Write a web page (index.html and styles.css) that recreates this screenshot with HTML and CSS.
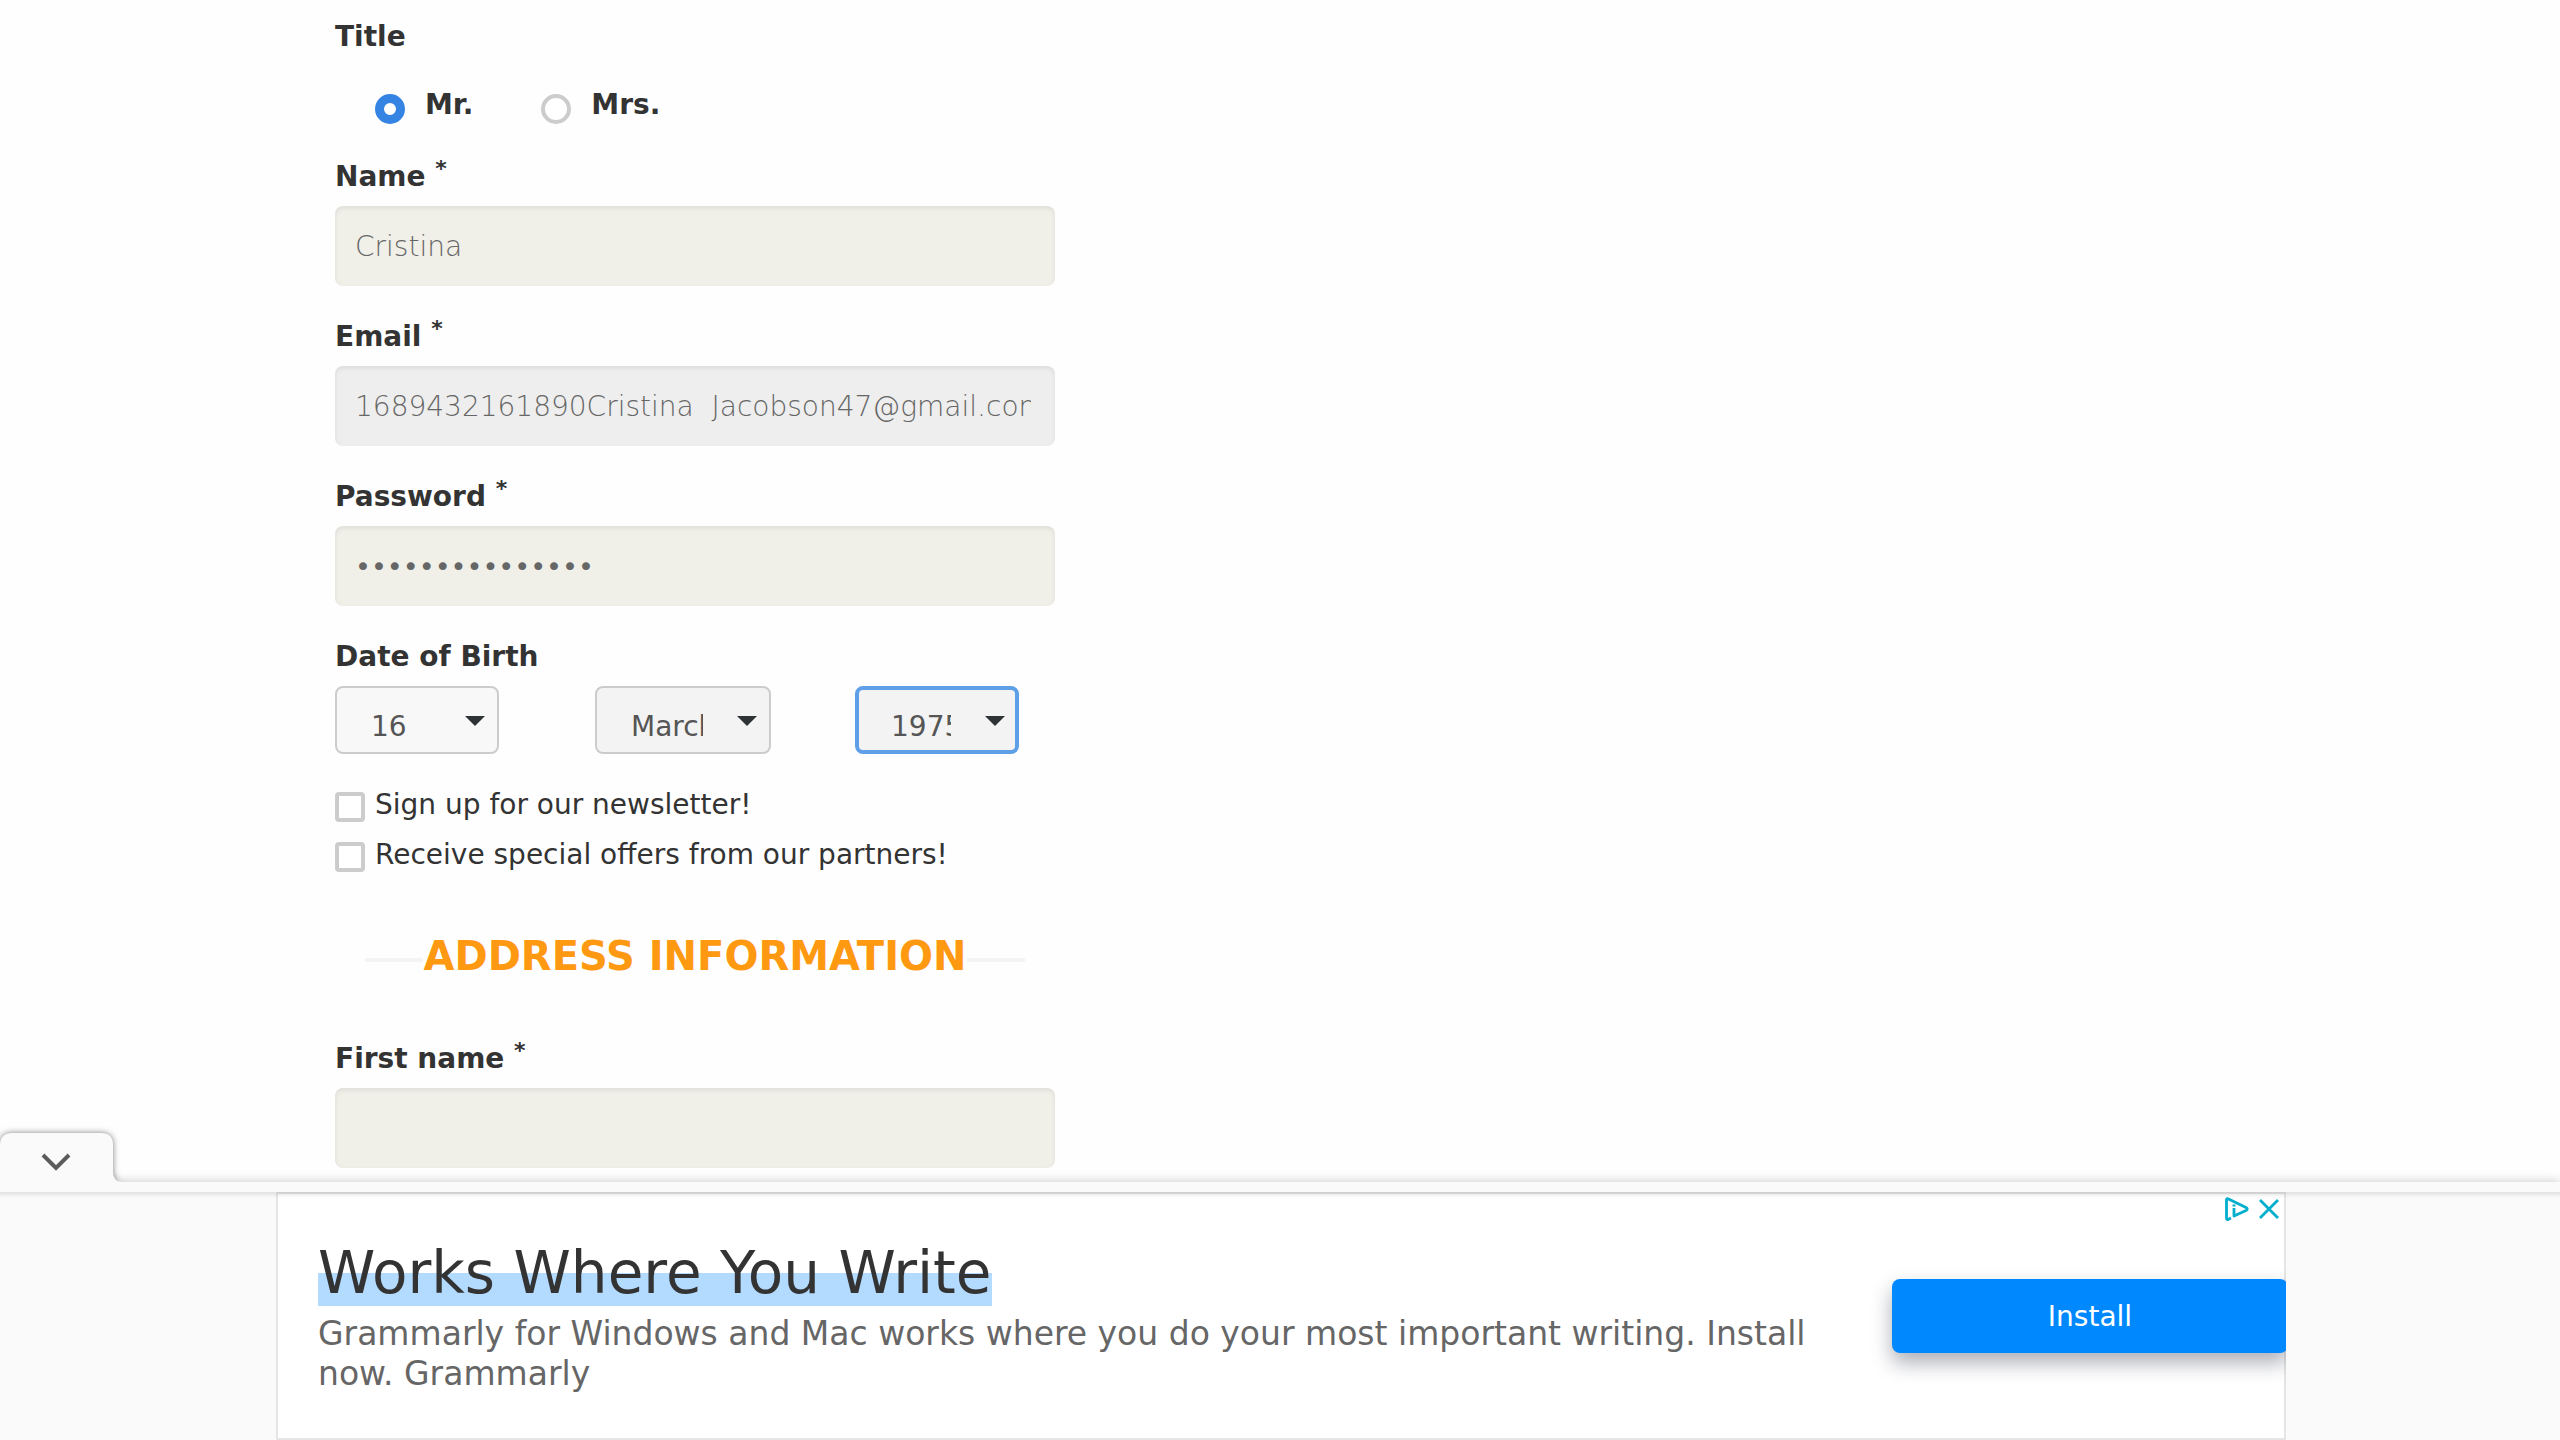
FILE: index.html
```html
<!DOCTYPE html>
<html lang="en">
<head>
<meta charset="utf-8">
<meta name="viewport" content="width=device-width, initial-scale=1">
<title>Create account</title>
<link rel="stylesheet" href="styles.css">
</head>
<body>
<main class="page">
  <form class="form">
    <fieldset class="group">
      <legend class="label">Title</legend>
      <div class="radios">
        <label class="radio"><input type="radio" name="title" checked><span>Mr.</span></label>
        <label class="radio"><input type="radio" name="title"><span>Mrs.</span></label>
      </div>
    </fieldset>

    <div class="field">
      <label class="label" for="name">Name <sup>*</sup></label>
      <input class="input" id="name" type="text" value="Cristina">
    </div>
    <div class="field">
      <label class="label" for="email">Email <sup>*</sup></label>
      <input class="input input-disabled" id="email" type="text" value="1689432161890Cristina  Jacobson47@gmail.com" readonly>
    </div>
    <div class="field">
      <label class="label" for="password">Password <sup>*</sup></label>
      <input class="input input-password" id="password" type="password" value="abcdefghijklmno">
    </div>

    <fieldset class="group">
      <legend class="label">Date of Birth</legend>
      <div class="dates">
        <div class="select select-day">
          <select aria-label="Day"><option>16</option></select>
          <svg class="arrow" viewBox="0 0 20 10" aria-hidden="true"><path d="M0 0h20L10 10z"/></svg>
        </div>
        <div class="select select-month">
          <select aria-label="Month"><option>March</option></select>
          <svg class="arrow" viewBox="0 0 20 10" aria-hidden="true"><path d="M0 0h20L10 10z"/></svg>
        </div>
        <div class="select select-active">
          <select aria-label="Year"><option>1975</option></select>
          <svg class="arrow" viewBox="0 0 20 10" aria-hidden="true"><path d="M0 0h20L10 10z"/></svg>
        </div>
      </div>
    </fieldset>

    <div class="checks">
      <label class="check"><input type="checkbox"><span>Sign up for our newsletter!</span></label>
      <label class="check"><input type="checkbox"><span>Receive special offers from our partners!</span></label>
    </div>

    <h2 class="heading">Address Information</h2>

    <div class="field">
      <label class="label" for="first-name">First name <sup>*</sup></label>
      <input class="input" id="first-name" type="text">
    </div>
  </form>
</main>

<aside class="banner">
  <button class="collapse" type="button" aria-label="Hide advertisement">
    <svg viewBox="0 0 132 60" aria-hidden="true">
      <path class="tab" d="M0 22Q1 11 12 11H101Q113 11 113 23V50Q113 60 123 60H0z"/>
      <path class="chevron" d="M43 33L56 46L69 33"/>
    </svg>
  </button>
  <div class="ad">
    <div class="copy">
      <h3 class="ad-title"><span>Works Where You Write</span></h3>
      <p class="ad-text">Grammarly for Windows and Mac works where you do your most important writing. Install now. Grammarly</p>
    </div>
    <button class="install" type="button">Install</button>
    <div class="ad-controls">
      <a href="#" aria-label="About this ad"><svg width="24" height="24" viewBox="0 0 24 24"><path d="M6 21L3 22.500Q1.500 23 1.500 21V3Q1.500 1 3.500 2L21 10.500Q23.500 12 21 13.500L9 19V11" fill="none" stroke="#00aecd" stroke-width="2.800" stroke-linejoin="round"/><path d="M7.500 7.500h3v2h-3z" fill="#00aecd"/></svg></a>
      <a href="#" aria-label="Close ad"><svg width="20" height="20" viewBox="0 0 20 20"><path d="M1 1L19 19M19 1L1 19" fill="none" stroke="#00aecd" stroke-width="2.800"/></svg></a>
    </div>
  </div>
</aside>
</body>
</html>
```
FILE: styles.css
```css
* {
  box-sizing: border-box;
}

body {
  margin: 0;
  height: 100vh;
  overflow: hidden;
  background: #fefefe;
  color: #333;
  font: 28px/36px "DejaVu Sans", sans-serif;
}

.page {
  padding: 19px 24px 0 335px;
}

.form {
  max-width: 720px;
}

.group {
  margin: 0 0 33px;
  padding: 0;
  border: 0;
  min-width: 0;
}

.group legend {
  padding: 0;
}

.label {
  display: block;
  font-weight: 700;
}

.label sup {
  font-size: 22px;
  line-height: 0;
  vertical-align: 10px;
}

.radios {
  display: flex;
  gap: 68px;
  margin-top: 33px;
  padding: 0 0 2px 40px;
}

.radio {
  display: flex;
  gap: 20px;
  height: 36px;
  font-weight: 700;
  line-height: 34px;
}

.radio input,
.check input {
  appearance: none;
  flex: none;
  align-self: flex-end;
  width: 30px;
  height: 30px;
  margin: 0;
  border: 4px solid #ccc;
  background: #fff;
}

.radio input {
  border-radius: 50%;
}

.radio input:checked {
  border: 9px solid #3584e4;
}

.field {
  margin-bottom: 33px;
}

.input {
  display: block;
  width: 100%;
  height: 80px;
  margin-top: 11px;
  padding: 0 24px 0 20px;
  border: 0;
  border-radius: 8px;
  outline: 0;
  background: #f0efe8;
  box-shadow: inset 0 2px 5px rgba(0, 0, 0, 0.08);
  color: #666;
  font: 200 28px/32px "DejaVu Sans", sans-serif;
}

.input-disabled {
  background: #eee;
}

.input-password {
  font-size: 27px;
  font-weight: 400;
}

.dates {
  display: grid;
  grid-template-columns: repeat(3, 260px);
  margin-top: 11px;
}

.select {
  position: relative;
  width: 164px;
}

.select-month {
  width: 176px;
}

.select select {
  appearance: none;
  display: block;
  width: 100%;
  height: 68px;
  padding: 14px 66px 0 34px;
  border: 2px solid #ccc;
  border-radius: 8px;
  background: #f3f3f3;
  color: #555;
  font: inherit;
}

.select-day select {
  background: #f8f8f8;
}

.select-active select {
  border: 4px solid #5e9fe8;
  padding: 14px 64px 0 32px;
}

.arrow {
  position: absolute;
  top: 30px;
  right: 14px;
  width: 20px;
  height: 10px;
  fill: #2e3436;
  pointer-events: none;
}

.checks {
  display: grid;
  gap: 15px;
}

.check {
  display: flex;
  gap: 10px;
  height: 35px;
}

.check input {
  border-radius: 4px;
}

.heading {
  display: flex;
  align-items: center;
  margin: 60px 30px 61px;
  color: #ff9912;
  font-size: 40px;
  line-height: 48px;
  text-transform: uppercase;
  white-space: nowrap;
}

.heading::before,
.heading::after {
  content: "";
  flex: 1;
  height: 4px;
  margin-top: 8px;
  background: #f4f4f4;
}

.banner {
  position: fixed;
  right: 0;
  bottom: 0;
  left: 0;
  padding: 10px 0 0 2px;
  background: #fafafa;
  box-shadow: 0 0 10px rgba(0, 0, 0, 0.22);
}

.banner::before {
  content: "";
  position: absolute;
  top: 10px;
  right: 0;
  left: 0;
  height: 6px;
  background: linear-gradient(rgba(0, 0, 0, 0.1), rgba(0, 0, 0, 0));
  z-index: 1;
}

.collapse {
  position: absolute;
  bottom: 100%;
  left: 0;
  padding: 0;
  border: 0;
  background: none;
}

.collapse svg {
  display: block;
  width: 132px;
  height: 60px;
}

.tab {
  fill: #fafafa;
  filter: drop-shadow(0 0 3px rgba(0, 0, 0, 0.5));
}

.chevron {
  fill: none;
  stroke: #5c5c5c;
  stroke-width: 4;
}

.ad {
  position: relative;
  display: flex;
  align-items: center;
  gap: 40px;
  max-width: 2010px;
  height: 248px;
  margin: 0 auto;
  padding-left: 40px;
  border: 2px solid #e5e5e5;
  background: #fff;
}

.copy {
  flex: 1;
  padding-top: 2px;
}

.ad-title {
  margin: 0 0 8px;
  color: #333;
  font-size: 58px;
  font-weight: 400;
  line-height: 66px;
}

.ad-title span {
  display: inline-block;
  background: linear-gradient(transparent 50%, #b3daff 50%);
}

.ad-text {
  margin: 0;
  color: #666;
  font-size: 33px;
  line-height: 40px;
}

.install {
  flex: none;
  width: 396px;
  height: 74px;
  margin-right: -4px;
  padding: 2px 0 0;
  border: 0;
  border-radius: 8px;
  background: #08f;
  box-shadow: 0 10px 20px rgba(20, 25, 50, 0.35);
  color: #fff;
  font: inherit;
  clip-path: inset(-20px 2px -40px -30px);
}

.ad-controls {
  position: absolute;
  top: 3px;
  right: 5px;
  display: flex;
  align-items: center;
  gap: 10px;
}

.ad-controls svg {
  display: block;
}
```
